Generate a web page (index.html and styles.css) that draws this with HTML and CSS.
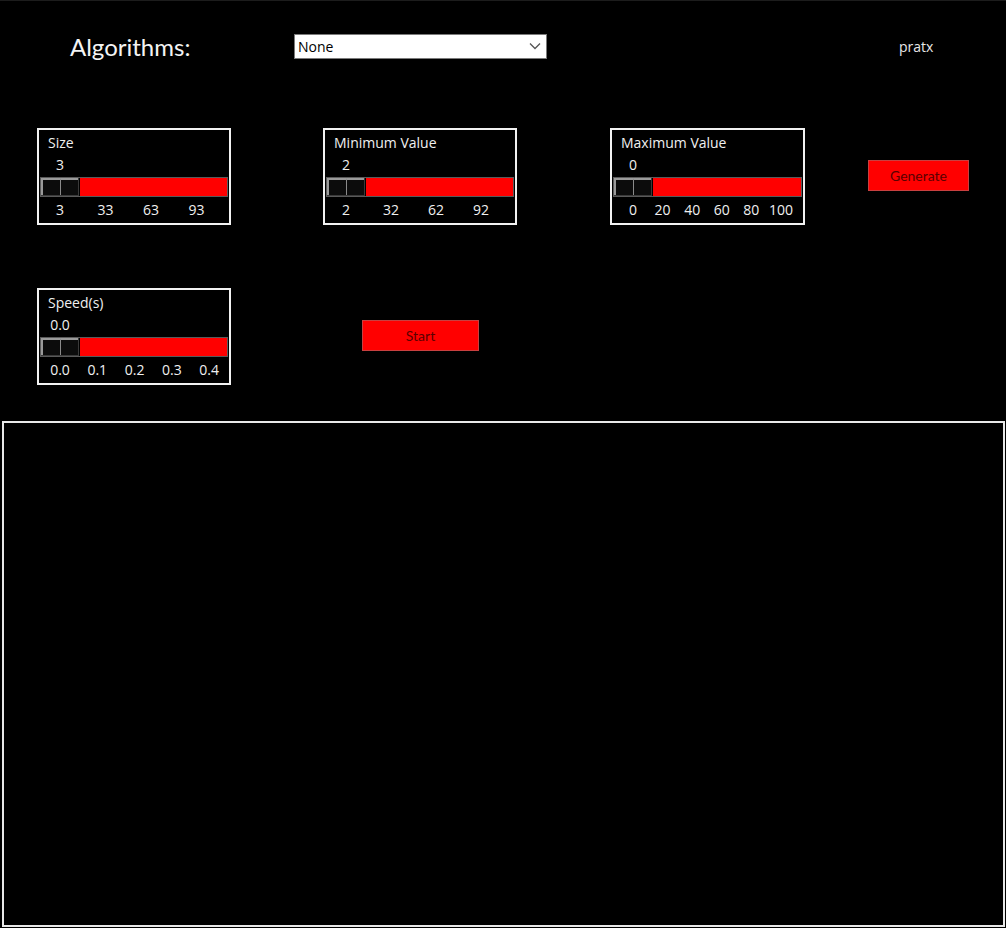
FILE: index.html
```html
<!DOCTYPE html>
<html>
<head>
<meta charset="utf-8">
<link rel="stylesheet" href="styles.css">
</head>
<body>
<div class="app">
  <div class="header">
    <div class="title">Algorithms:</div>
    <div class="select">
      <span class="select-text">None</span>
      <svg class="chev" width="12" height="8" viewBox="0 0 12 8"><path d="M1 1.5 L6 6.5 L11 1.5" fill="none" stroke="#555" stroke-width="1.3"/></svg>
    </div>
    <div class="user">pratx</div>
  </div>

  <div class="row row1">
    <div class="scale s-size">
      <div class="lbl">Size</div>
      <div class="val">3</div>
      <div class="trough"><div class="thumb"><span></span><span></span></div><div class="fill"></div></div>
      <div class="ticks"><span>3</span><span>33</span><span>63</span><span>93</span></div>
    </div>
    <div class="scale s-min">
      <div class="lbl">Minimum Value</div>
      <div class="val">2</div>
      <div class="trough"><div class="thumb"><span></span><span></span></div><div class="fill"></div></div>
      <div class="ticks"><span>2</span><span>32</span><span>62</span><span>92</span></div>
    </div>
    <div class="scale s-max">
      <div class="lbl">Maximum Value</div>
      <div class="val">0</div>
      <div class="trough"><div class="thumb"><span></span><span></span></div><div class="fill"></div></div>
      <div class="ticks"><span>0</span><span>20</span><span>40</span><span>60</span><span>80</span><span>100</span></div>
    </div>
    <div class="btn btn-gen">Generate</div>
  </div>

  <div class="row row2">
    <div class="scale s-speed">
      <div class="lbl">Speed(s)</div>
      <div class="val">0.0</div>
      <div class="trough"><div class="thumb"><span></span><span></span></div><div class="fill"></div></div>
      <div class="ticks"><span>0.0</span><span>0.1</span><span>0.2</span><span>0.3</span><span>0.4</span></div>
    </div>
    <div class="btn btn-start">Start</div>
  </div>

  <div class="canvas"></div>
</div>
</body>
</html>
```
FILE: styles.css
```css
html, body {
  margin: 0;
  padding: 0;
  background: #000;
}
.app {
  width: 1006px;
  height: 928px;
  overflow: hidden;
  background: #000;
  border-top: 1px solid #1c1c1c;
  box-sizing: border-box;
  font-family: "Open Sans", "DejaVu Sans", sans-serif;
  color: #f0f0f0;
}
.header {
  display: flex;
  align-items: center;
  height: 26px;
  margin-top: 32px;
}
.title {
  font-family: Lato, "Open Sans", sans-serif;
  font-size: 24px;
  color: #f4f4f4;
  margin-left: 70px;
  width: 224px;
}
.select {
  width: 253px;
  height: 25px;
  box-sizing: border-box;
  background: #fff;
  border: 1px solid #7a7a7a;
  display: flex;
  align-items: center;
  justify-content: space-between;
  padding: 0 4px 0 3px;
}
.select-text {
  font-size: 14px;
  color: #000;
}
.chev {
  margin-right: 1px;
}
.user {
  margin-left: 352px;
  font-size: 14px;
  color: #e8e8e8;
}
.row {
  display: flex;
  align-items: flex-start;
  padding-left: 37px;
}
.row1 {
  margin-top: 69px;
}
.row2 {
  margin-top: 63px;
}
.scale {
  width: 194px;
  height: 97px;
  box-sizing: border-box;
  border: 2px solid #f2f2f2;
  padding: 4px 1px 0 1px;
  font-size: 14px;
  line-height: 18px;
  color: #f0f0f0;
  overflow: hidden;
  --step: 45.5px;
}
.s-min {
  margin-left: 92px;
  --step: 45px;
}
.s-max {
  margin-left: 93px;
  width: 195px;
  --step: 29.6px;
}
.s-speed {
  --step: 37.3px;
}
.lbl {
  padding-left: 8px;
}
.val {
  width: 40px;
  text-align: center;
  margin-top: 4px;
}
.trough {
  margin-top: 3px;
  height: 20px;
  box-sizing: border-box;
  border: 1px solid #5a5a5a;
  display: flex;
  padding: 0;
}
.thumb {
  display: flex;
  width: 38px;
  height: 18px;
  background: #0c0c0c;
  box-sizing: border-box;
  border-right: 1px solid #3a3a3a;
  border-bottom: 1px solid #3a3a3a;
}
.thumb span {
  flex: 1;
  border-left: 2px solid #9a9a9a;
  border-top: 2px solid #9a9a9a;
}
.thumb span + span {
  border-left: 1px solid #8a8a8a;
}
.fill {
  flex: 1;
  background: #ff0000;
  margin-left: 1px;
}
.ticks {
  display: flex;
  margin-top: 4px;
  margin-left: calc(20px - var(--step) / 2);
  white-space: nowrap;
}
.ticks span {
  width: var(--step);
  flex: none;
  text-align: center;
}
.btn {
  background: #ff0000;
  border: 1px solid #c84040;
  box-sizing: border-box;
  height: 31px;
  display: flex;
  align-items: center;
  justify-content: center;
  font-family: Lato, "Open Sans", sans-serif;
  font-size: 14px;
  color: #5a0000;
}
.btn-gen {
  width: 101px;
  margin-left: 63px;
  margin-top: 32px;
}
.btn-start {
  width: 117px;
  margin-left: 131px;
  margin-top: 32px;
}
.canvas {
  margin-top: 36px;
  margin-left: 2px;
  width: 1003px;
  height: 506px;
  box-sizing: border-box;
  border: 2px solid #e8e8e8;
}
```
